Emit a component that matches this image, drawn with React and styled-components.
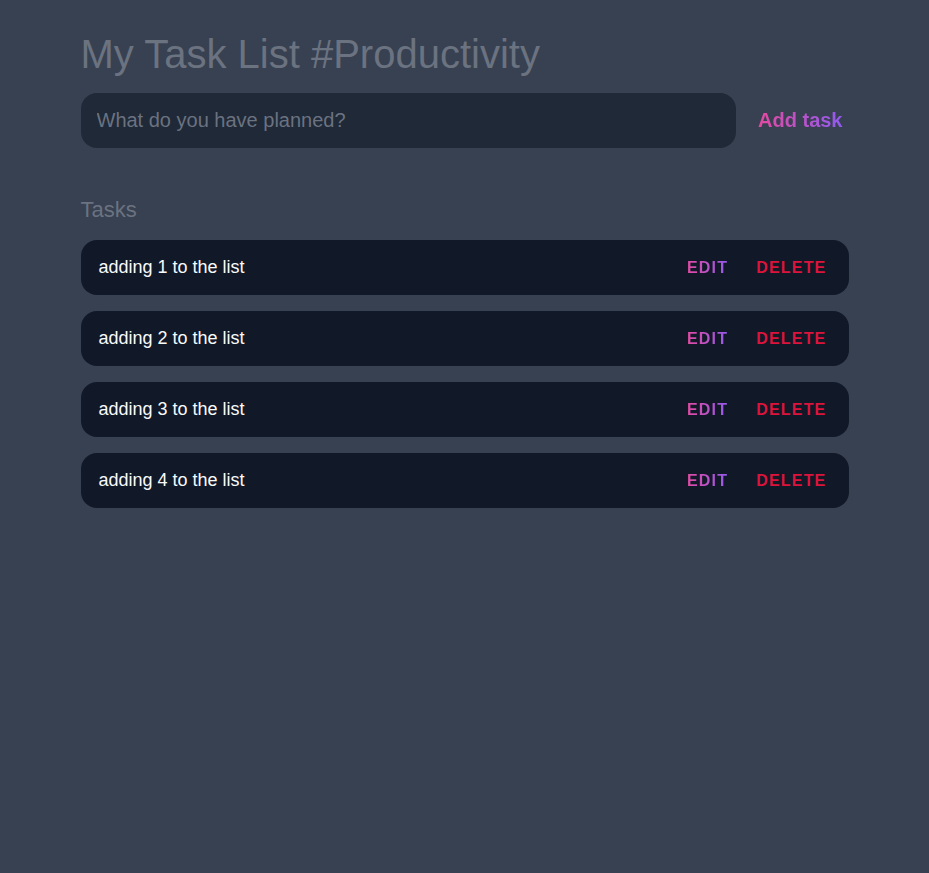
import React, { useState } from 'react'
import styled, { createGlobalStyle } from 'styled-components'

const GlobalStyle = createGlobalStyle`
  html, body {
    margin: 0;
    padding: 0;
    background: #374151;
    min-height: 100vh;
    font-family: "Liberation Sans", Arial, sans-serif;
  }
`

const Page = styled.div`
  min-height: 100vh;
  background: #374151;
`

const Container = styled.div`
  max-width: 768px;
  margin: 0 auto;
  padding-top: 32px;
`

const Title = styled.h1`
  margin: 0 0 17px;
  font-size: 40px;
  line-height: 44px;
  font-weight: 400;
  color: #6b7280;
`

const Form = styled.form`
  display: flex;
  align-items: center;
`

const Input = styled.input`
  flex: 1;
  height: 55px;
  box-sizing: border-box;
  padding: 0 16px;
  border: none;
  border-radius: 16px;
  background: #1f2937;
  color: #f3f4f6;
  font-family: inherit;
  font-size: 20px;
  outline: none;

  &::placeholder {
    color: #6b7280;
  }
`

const GradientButton = styled.button`
  border: none;
  background: linear-gradient(90deg, #ec4899, #8b5cf6);
  -webkit-background-clip: text;
  background-clip: text;
  color: transparent;
  font-family: inherit;
  font-weight: 700;
  font-size: ${p => p.size || 16}px;
  letter-spacing: ${p => p.spacing || 0}px;
  text-transform: ${p => (p.upper ? 'uppercase' : 'none')};
  cursor: pointer;
  padding: 0 6px;
`

const AddButton = styled(GradientButton)`
  margin-left: 14px;
  padding: 0 6px 0 8px;
  line-height: 55px;
`

const Heading = styled.h2`
  margin: 48px 0 16px;
  font-size: 22px;
  line-height: 28px;
  font-weight: 400;
  color: #6b7280;
`

const List = styled.div`
  display: flex;
  flex-direction: column;
  gap: 16px;
`

const Row = styled.div`
  display: flex;
  align-items: center;
  justify-content: space-between;
  height: 55px;
  padding: 0 16px 0 18px;
  border-radius: 16px;
  background: #111827;
`

const TaskText = styled.span`
  font-size: 18px;
  color: #f9fafb;
`

const Actions = styled.div`
  display: flex;
  gap: 16px;
`

const DeleteButton = styled.button`
  border: none;
  background: none;
  padding: 0 6px;
  font-family: inherit;
  font-weight: 700;
  font-size: 16px;
  letter-spacing: 1.2px;
  text-transform: uppercase;
  color: #dc143c;
  cursor: pointer;
`

export default function App() {
  const [tasks, setTasks] = useState([
    'adding 1 to the list',
    'adding 2 to the list',
    'adding 3 to the list',
    'adding 4 to the list',
  ])
  const [text, setText] = useState('')

  const addTask = e => {
    e.preventDefault()
    if (!text.trim()) return
    setTasks([...tasks, text])
    setText('')
  }

  return (
    <Page>
      <GlobalStyle />
      <Container>
        <Title>My Task List #Productivity</Title>
        <Form onSubmit={addTask}>
          <Input
            placeholder="What do you have planned?"
            value={text}
            onChange={e => setText(e.target.value)}
          />
          <AddButton type="submit" size={20}>Add task</AddButton>
        </Form>
        <Heading>Tasks</Heading>
        <List>
          {tasks.map((t, i) => (
            <Row key={i}>
              <TaskText>{t}</TaskText>
              <Actions>
                <GradientButton upper spacing={1.2}>Edit</GradientButton>
                <DeleteButton onClick={() => setTasks(tasks.filter((_, j) => j !== i))}>
                  Delete
                </DeleteButton>
              </Actions>
            </Row>
          ))}
        </List>
      </Container>
    </Page>
  )
}
